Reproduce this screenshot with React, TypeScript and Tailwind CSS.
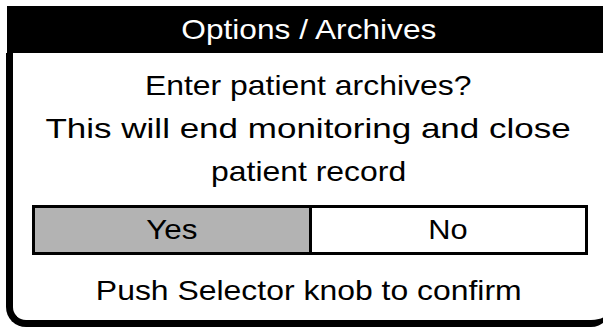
export default function App() {
    const font = { fontFamily: '"Liberation Sans", Arial, sans-serif' };
    return (
        <div className="h-[328px] w-[603px] overflow-hidden bg-white" style={font}>
            <div className="ml-[6px] mt-[6px] w-[605px]">
                {/* Title bar */}
                <div className="ml-px flex h-[47px] items-center justify-center bg-black pr-px text-[28px] text-white">
                    <span className="inline-block scale-x-[1.13]">Options / Archives</span>
                </div>

                {/* Dialog body — right edge runs off screen, only the bottom corner shows */}
                <div className="flex h-[274px] flex-col rounded-b-[20px] border-b-[7px] border-l-[7px] border-black pr-[7px]">
                    <div className="pt-[11px] text-center text-[28px] leading-[43px] text-black">
                        <p>
                            <span className="inline-block scale-x-[1.14]">Enter patient archives?</span>
                        </p>
                        <p>
                            <span className="inline-block scale-x-[1.25]">This will end monitoring and close</span>
                        </p>
                        <p>
                            <span className="inline-block scale-x-[1.14]">patient record</span>
                        </p>
                    </div>

                    <div className="ml-[19px] mt-[12px] flex h-[50px] w-[556px] border-[3px] border-black text-[28px] text-black">
                        <div className="flex flex-1 items-center justify-center border-r-[3px] border-black bg-[#b3b3b3]">
                            <span className="inline-block scale-x-[1.12]">Yes</span>
                        </div>
                        <div className="flex flex-1 items-center justify-center bg-white">
                            <span className="inline-block scale-x-[1.1]">No</span>
                        </div>
                    </div>

                    <p className="mt-[14px] text-center text-[28px] leading-[43px] text-black">
                        <span className="inline-block scale-x-[1.14]">Push Selector knob to confirm</span>
                    </p>
                </div>
            </div>
        </div>
    );
}
